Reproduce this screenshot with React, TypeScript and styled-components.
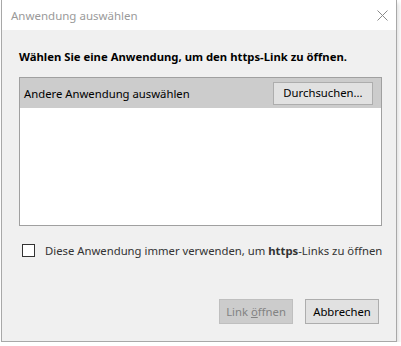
import React from 'react'
import styled, { createGlobalStyle } from 'styled-components'

const GlobalStyle = createGlobalStyle`
  html, body {
    margin: 0;
    padding: 0;
    background: #ffffff;
  }
  body {
    font-family: "Noto Sans", "Open Sans", sans-serif;
    font-size: 11.3px;
    color: #000;
  }
`

const Window = styled.div`
  width: 396px;
  height: 342px;
  margin-left: 1px;
  box-sizing: border-box;
  border: 1px solid #a8a8a8;
  border-top: none;
  background: #f0f0f0;
  display: flex;
  flex-direction: column;
  box-shadow: 2px 3px 4px rgba(0, 0, 0, 0.12);
`

const TitleBar = styled.div`
  height: 30px;
  background: #ffffff;
  display: flex;
  align-items: center;
  justify-content: space-between;
  padding: 0 8px 0 9px;
  flex-shrink: 0;
`

const Title = styled.span`
  color: #9a9a9a;
  font-size: 11.5px;
`

const Body = styled.div`
  flex: 1;
  display: flex;
  flex-direction: column;
  padding: 19px 13px 17px 17px;
`

const Heading = styled.div`
  font-weight: bold;
  line-height: 16px;
  margin-bottom: 12px;
`

const ListBox = styled.div`
  height: 147px;
  border: 1px solid #a0a0a0;
  background: #ffffff;
  margin-right: 1px;
  display: flex;
  flex-direction: column;
`

const ListHeader = styled.div`
  height: 30px;
  background: #cccccc;
  display: flex;
  align-items: center;
  justify-content: space-between;
  padding: 0 8px 0 4px;
`

const Button = styled.button<{ $disabled?: boolean }>`
  font-family: inherit;
  font-size: 11.3px;
  height: 25px;
  width: 74px;
  padding: 0;
  border: 1px solid ${({ $disabled }) => ($disabled ? '#bfbfbf' : '#adadad')};
  background: ${({ $disabled }) => ($disabled ? '#cccccc' : '#e1e1e1')};
  color: ${({ $disabled }) => ($disabled ? '#838383' : '#000')};
  border-radius: 0;
  line-height: 1;
`

const BrowseButton = styled(Button)`
  height: 23px;
  width: 100px;
`

const CheckRow = styled.label`
  display: flex;
  align-items: center;
  margin-top: 17px;
  margin-left: 3px;
  color: #333;
  gap: 10px;
  white-space: nowrap;
`

const Box = styled.span`
  width: 11px;
  height: 11px;
  border: 1px solid #333333;
  background: #fff;
  flex-shrink: 0;
`

const Footer = styled.div`
  margin-top: auto;
  display: flex;
  justify-content: flex-end;
  gap: 12px;
  padding-right: 4px;
`

const Underline = styled.span`
  text-decoration: underline;
`

const CloseIcon = () => (
  <svg width="11" height="11" viewBox="0 0 11 11">
    <path d="M0.5 0.5 L10.5 10.5 M10.5 0.5 L0.5 10.5" stroke="#8a8a8a" strokeWidth="1" fill="none" />
  </svg>
)

export default function App() {
  return (
    <>
      <GlobalStyle />
      <Window>
        <TitleBar>
          <Title>Anwendung auswählen</Title>
          <CloseIcon />
        </TitleBar>
        <Body>
          <Heading>Wählen Sie eine Anwendung, um den https-Link zu öffnen.</Heading>
          <ListBox>
            <ListHeader>
              <span>Andere Anwendung auswählen</span>
              <BrowseButton>Durchsuchen...</BrowseButton>
            </ListHeader>
          </ListBox>
          <CheckRow>
            <Box />
            <span>
              Diese Anwendung immer verwenden, um <b>https</b>-Links zu öffnen
            </span>
          </CheckRow>
          <Footer>
            <Button $disabled>
              Link <Underline>ö</Underline>ffnen
            </Button>
            <Button>Abbrechen</Button>
          </Footer>
        </Body>
      </Window>
    </>
  )
}
